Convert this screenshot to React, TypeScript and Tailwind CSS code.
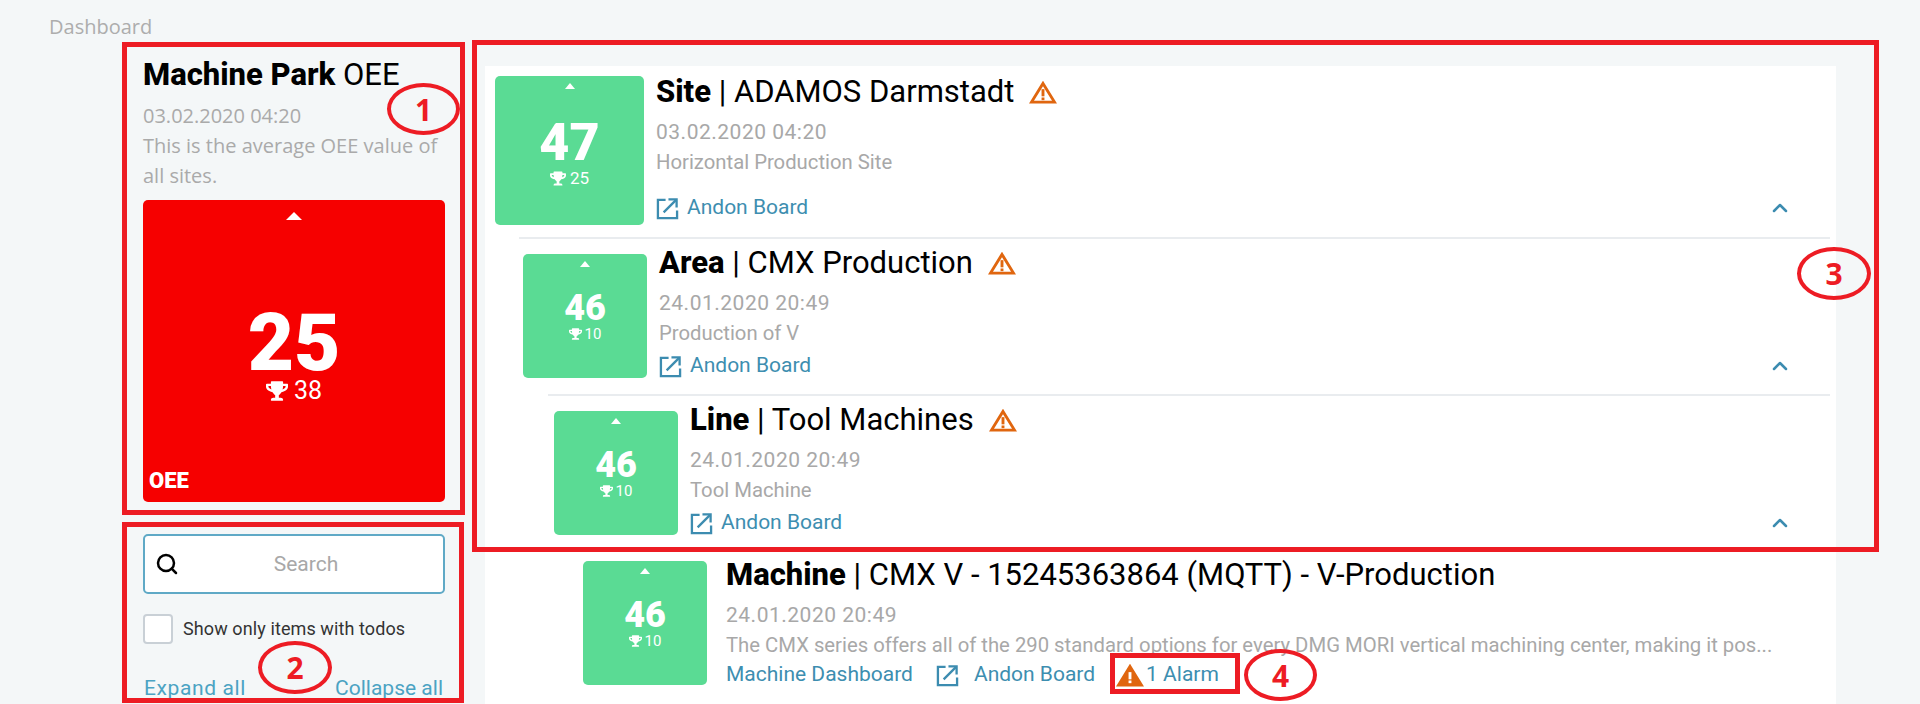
import { ChevronUp, Search } from "lucide-react";
import { FaTrophy } from "react-icons/fa";

function WarnIcon({ filled }: { filled?: boolean }) {
  return (
    <svg viewBox="0 0 28 24" className="w-[28px] h-[23px] shrink-0">
      <path
        d="M14 2.5 L26 22 H2 Z"
        fill={filled ? "#e0660f" : "none"}
        stroke="#e0660f"
        strokeWidth="3"
        strokeLinejoin="miter"
      />
      <rect x="12.5" y="8.5" width="3" height="7.5" fill={filled ? "#fff" : "#e0660f"} />
      <rect x="12.5" y="17.2" width="3" height="2.8" fill={filled ? "#fff" : "#e0660f"} />
    </svg>
  );
}

function LinkIcon() {
  return (
    <svg viewBox="0 0 24 24" className="w-[23px] h-[23px] shrink-0" fill="none" stroke="#3c8cb0" strokeWidth="2.4">
      <path d="M10 3 H2 V22 H22 V14" />
      <path d="M8 16 L21 3" />
      <path d="M13 2.5 H21.5 V11" />
    </svg>
  );
}

function AndonLink() {
  return (
    <a className="flex items-center gap-[8px] text-[21px] text-[#3d8eb0]">
      <LinkIcon />
      Andon Board
    </a>
  );
}

function Tile({ value, best, size }: { value: string; best: string; size: "lg" | "sm" }) {
  const lg = size === "lg";
  return (
    <div
      className={
        lg
          ? "w-[149px] h-[149px] shrink-0 rounded-[5px] bg-[#5adb94] text-white flex flex-col items-center relative"
          : "w-[124px] h-[124px] shrink-0 rounded-[5px] bg-[#5adb94] text-white flex flex-col items-center relative"
      }
    >
      <div className="mt-[7px] w-0 h-0 border-x-[5px] border-x-transparent border-b-[6px] border-b-white" />
      <div
        className={
          lg
            ? "mt-[30px] text-[52px] leading-[48px] font-black"
            : "mt-[24px] text-[36px] leading-[34px] font-black"
        }
      >
        {value}
      </div>
      <div
        className={
          lg
            ? "flex items-center gap-[4px] text-[17px] leading-[20px] mt-[1px]"
            : "flex items-center gap-[3px] text-[15px] leading-[18px] mt-[0px]"
        }
      >
        <FaTrophy className={lg ? "w-[16px] h-[15px]" : "w-[13px] h-[12px]"} />
        {best}
      </div>
    </div>
  );
}

function Title({ kind, name, warn }: { kind: string; name: string; warn?: boolean }) {
  return (
    <div className="h-[32px] flex items-center gap-[15px] text-[31px] text-black whitespace-nowrap">
      <span>
        <b className="font-extrabold">{kind}</b> | {name}
      </span>
      {warn && <WarnIcon />}
    </div>
  );
}

function Date_({ children }: { children: string }) {
  return <div className="mt-[9px] h-[30px] leading-[30px] text-[21px] tracking-[0.5px] text-[#a8a8a8]">{children}</div>;
}

function Desc({ children }: { children: string }) {
  return <div className="h-[30px] leading-[30px] text-[20.3px] text-[#a8a8a8] whitespace-nowrap">{children}</div>;
}

function Callout({ n, className }: { n: string; className: string }) {
  return (
    <div
      className={`absolute rounded-[50%] border-[4px] border-[#ed1c24] flex items-center justify-center text-[#ed1c24] font-bold text-[30px] font-['Open_Sans',sans-serif] ${className}`}
    >
      {n}
    </div>
  );
}

export default function App() {
  return (
    <div className="relative w-[1920px] h-[704px] overflow-hidden bg-[#f4f7f8] font-['Roboto',sans-serif]">
      <div className="h-[54px] pl-[49px] pt-[13px] text-[20px] leading-[28px] text-[#adadad] font-['Open_Sans',sans-serif]">
        Dashboard
      </div>

      <div className="flex pl-[143px] gap-[40px]">
        {/* left column */}
        <aside className="w-[302px] shrink-0">
          <div className="h-[42px] leading-[42px] text-[31px] text-black whitespace-nowrap">
            <b className="font-extrabold">Machine Park</b> OEE
          </div>
          <div className="font-['Open_Sans',sans-serif] text-[20px] leading-[30px] text-[#aaaaaa] mt-[5px]">
            <div>03.02.2020 04:20</div>
            <div>This is the average OEE value of all sites.</div>
          </div>
          <div className="relative mt-[9px] h-[302px] rounded-[5px] bg-[#f60000] text-white flex flex-col items-center">
            <div className="mt-[12px] w-0 h-0 border-x-[8px] border-x-transparent border-b-[8px] border-b-white" />
            <div className="mt-[87px] text-[80px] leading-[72px] font-black">25</div>
            <div className="flex items-center gap-[6px] text-[25px] leading-[28px] -mt-[2px]">
              <FaTrophy className="w-[22px] h-[20px]" />
              38
            </div>
            <div className="absolute left-[6px] bottom-[8px] text-[22px] leading-[26px] font-black">OEE</div>
          </div>

          <div className="mt-[32px] h-[60px] rounded-[5px] border-2 border-[#5fa9c6] bg-white flex items-center px-[10px] relative">
            <Search className="w-[24px] h-[24px] shrink-0 text-black" strokeWidth={2.5} />
            <input
              placeholder="Search"
              className="flex-1 min-w-0 text-center text-[21px] pt-[2px] outline-none placeholder:text-[#a8a8a8] bg-transparent"
            />
          </div>
          <label className="mt-[20px] flex items-center gap-[10px]">
            <span className="w-[30px] h-[30px] rounded-[4px] border-2 border-[#c9d0d6] bg-white" />
            <span className="text-[18px] tracking-[0.1px] text-[#333333] -mt-[2px]">Show only items with todos</span>
          </label>
          <div className="mt-[29px] flex justify-between pl-[1px] pr-[2px] text-[21px] leading-[30px] text-[#4ba3c3]">
            <a className="tracking-[0.6px]">Expand all</a>
            <a>Collapse all</a>
          </div>
        </aside>

        {/* tree */}
        <main className="w-[1351px] mt-[12px] h-[638px] bg-white">
          <section className="h-[163px] pl-[10px] pt-[10px] pr-[44px] flex gap-[12px]">
            <Tile value="47" best="25" size="lg" />
            <div className="flex-1 min-w-0">
              <Title kind="Site" name="ADAMOS Darmstadt" warn />
              <Date_>03.02.2020 04:20</Date_>
              <Desc>Horizontal Production Site</Desc>
              <div className="mt-[16px] h-[30px] flex items-center justify-between">
                <AndonLink />
                <ChevronUp className="w-[24px] h-[24px] text-[#3c8cb0]" strokeWidth={2.5} />
              </div>
            </div>
          </section>

          <div className="mt-[8px] ml-[34px] mr-[6px] h-[2px] bg-[#e9ecef]" />
          <section className="h-[155px] pl-[38px] pt-[15px] pr-[44px] flex gap-[12px]">
            <Tile value="46" best="10" size="sm" />
            <div className="flex-1 min-w-0 -mt-[7px]">
              <Title kind="Area" name="CMX Production" warn />
              <Date_>24.01.2020 20:49</Date_>
              <Desc>Production of V</Desc>
              <div className="mt-[3px] h-[30px] flex items-center justify-between">
                <AndonLink />
                <ChevronUp className="w-[24px] h-[24px] text-[#3c8cb0]" strokeWidth={2.5} />
              </div>
            </div>
          </section>

          <div className="ml-[63px] mr-[6px] h-[2px] bg-[#e9ecef]" />
          <section className="h-[165px] pl-[69px] pt-[15px] pr-[44px] flex gap-[12px]">
            <Tile value="46" best="10" size="sm" />
            <div className="flex-1 min-w-0 -mt-[7px]">
              <Title kind="Line" name="Tool Machines" warn />
              <Date_>24.01.2020 20:49</Date_>
              <Desc>Tool Machine</Desc>
              <div className="mt-[3px] h-[30px] flex items-center justify-between">
                <AndonLink />
                <ChevronUp className="w-[24px] h-[24px] text-[#3c8cb0]" strokeWidth={2.5} />
              </div>
            </div>
          </section>

          <section className="pl-[98px] flex gap-[19px]">
            <Tile value="46" best="10" size="sm" />
            <div className="w-[1076px] -mt-[2px]">
              <Title kind="Machine" name="CMX V - 15245363864 (MQTT) - V-Production" />
              <Date_>24.01.2020 20:49</Date_>
              <Desc>
                The CMX series offers all of the 290 standard options for every DMG MORI vertical machining center, making it pos...
              </Desc>
              <div className="h-[30px] flex items-center text-[21px] text-[#3d8eb0]">
                <a>Machine Dashboard</a>
                <a className="ml-[23px] flex items-center gap-[15px]">
                  <LinkIcon />
                  Andon Board
                </a>
                <a className="ml-[21px] flex items-center gap-[2px]">
                  <WarnIcon filled />1 Alarm
                </a>
              </div>
            </div>
          </section>
        </main>
      </div>

      {/* red annotation frames on top of the screenshot */}
      <div className="absolute left-[122px] top-[42px] w-[343px] h-[473px] border-[5px] border-[#ed1c24]" />
      <div className="absolute left-[122px] top-[522px] w-[342px] h-[181px] border-[5px] border-[#ed1c24]" />
      <div className="absolute left-[472px] top-[40px] w-[1407px] h-[512px] border-[5px] border-[#ed1c24]" />
      <div className="absolute left-[1110px] top-[653px] w-[130px] h-[41px] border-[5px] border-[#ed1c24]" />
      <Callout n="1" className="left-[387px] top-[83px] w-[73px] h-[52px]" />
      <Callout n="2" className="left-[258px] top-[641px] w-[74px] h-[53px]" />
      <Callout n="3" className="left-[1797px] top-[247px] w-[74px] h-[53px]" />
      <Callout n="4" className="left-[1244px] top-[649px] w-[73px] h-[52px]" />
    </div>
  );
}
